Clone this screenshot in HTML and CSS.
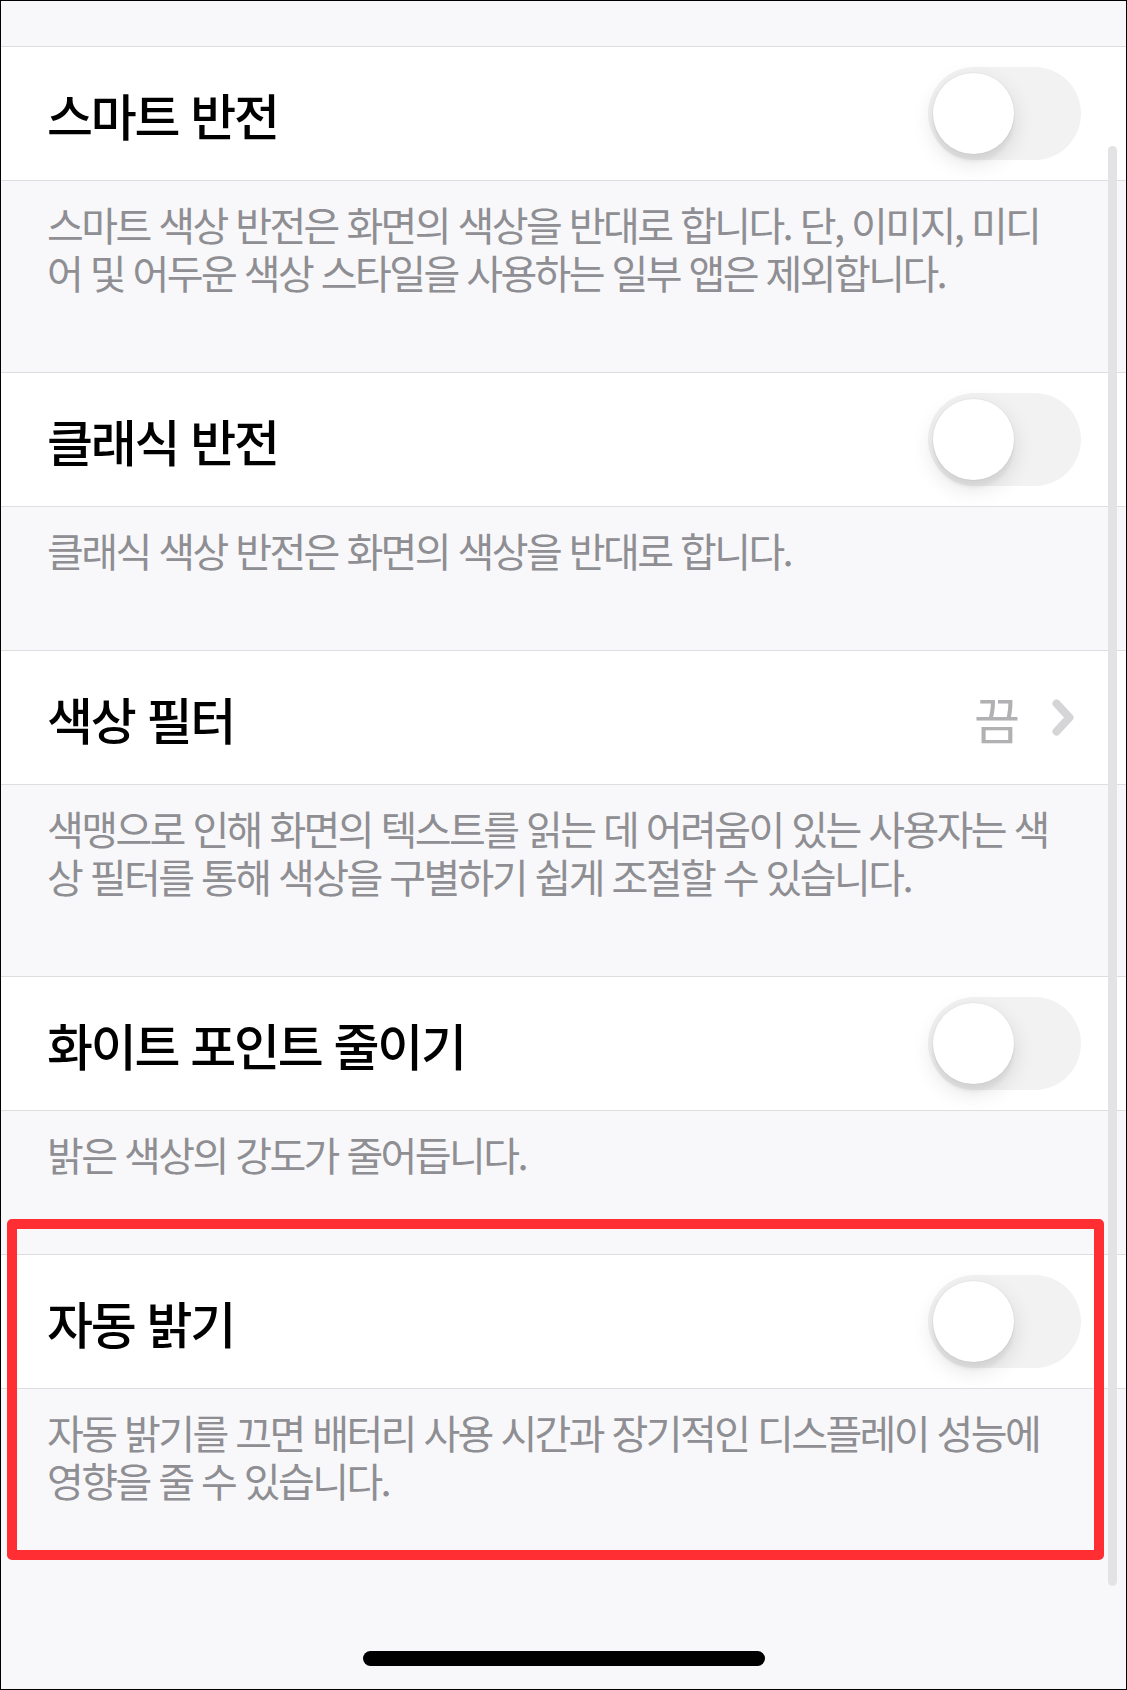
FILE: index.html
```html
<!DOCTYPE html>
<html lang="ko">
<head>
  <meta charset="UTF-8" />
  <meta name="viewport" content="width=device-width, initial-scale=1.0"/>
  <title>디스플레이 및 텍스트 크기</title>
  <link rel="stylesheet" href="styles.css">
</head>
<body>
  <div class="screen">
    <div class="list-top"></div>

    <div class="cell">
      <span class="cell-title">스마트 반전</span>
      <span class="switch"><span class="knob"></span></span>
    </div>
    <p class="footer">스마트 색상 반전은 화면의 색상을 반대로 합니다. 단, 이미지, 미디어 및 어두운 색상 스타일을 사용하는 일부 앱은 제외합니다.</p>

    <div class="cell">
      <span class="cell-title">클래식 반전</span>
      <span class="switch"><span class="knob"></span></span>
    </div>
    <p class="footer">클래식 색상 반전은 화면의 색상을 반대로 합니다.</p>

    <div class="cell">
      <span class="cell-title">색상 필터</span>
      <span class="cell-value">
        끔
        <svg class="chevron" width="22" height="37" viewBox="0 0 22 37">
          <path d="M4.5 4.5 L17.5 18.5 L4.5 32.5" fill="none" stroke="#d5d5d8" stroke-width="8" stroke-linecap="round" stroke-linejoin="round"/>
        </svg>
      </span>
    </div>
    <p class="footer">색맹으로 인해 화면의 텍스트를 읽는 데 어려움이 있는 사용자는 색상 필터를 통해 색상을 구별하기 쉽게 조절할 수 있습니다.</p>

    <div class="cell">
      <span class="cell-title">화이트 포인트 줄이기</span>
      <span class="switch"><span class="knob"></span></span>
    </div>
    <p class="footer">밝은 색상의 강도가 줄어듭니다.</p>

    <div class="cell">
      <span class="cell-title">자동 밝기</span>
      <span class="switch"><span class="knob"></span></span>
    </div>
    <p class="footer">자동 밝기를 끄면 배터리 사용 시간과 장기적인 디스플레이 성능에 영향을 줄 수 있습니다.</p>

    <div class="highlight"></div>
    <div class="scrollbar"></div>
    <div class="home-bar"></div>
  </div>
</body>
</html>
```

FILE: styles.css
```css
* {
  box-sizing: border-box;
}
html, body {
  margin: 0;
  padding: 0;
  background: #f8f8fa;
}
.screen {
  position: relative;
  width: 1127px;
  height: 1690px;
  border: 1px solid #000;
  background: #f8f8fa;
  overflow: hidden;
  font-family: "Noto Sans CJK KR", "Noto Sans", sans-serif;
}
.list-top {
  height: 45px;
}
.cell {
  display: flex;
  align-items: center;
  justify-content: space-between;
  height: 135px;
  padding: 0 45px 0 46px;
  background: #fff;
  border-top: 1px solid #dedee0;
  border-bottom: 1px solid #dedee0;
}
.cell-title {
  font-size: 50px;
  font-weight: 500;
  letter-spacing: -2.2px;
  color: #000;
}
.cell-value {
  display: flex;
  align-items: center;
  gap: 32px;
  padding-right: 7px;
  font-size: 50px;
  color: #b1b1b4;
}
.switch {
  position: relative;
  width: 153px;
  height: 93px;
  border-radius: 47px;
  background: #f2f2f3;
}
.knob {
  position: absolute;
  left: 5px;
  top: 6px;
  width: 81px;
  height: 81px;
  border-radius: 50%;
  background: #fff;
  box-shadow: 0 0 0 1px rgba(0, 0, 0, 0.03), 0 8px 22px rgba(0, 0, 0, 0.12), 0 8px 3px rgba(0, 0, 0, 0.04);
}
.footer {
  margin: 0;
  padding: 19px 62px 76px 46px;
  font-size: 40px;
  line-height: 48px;
  letter-spacing: -2.6px;
  color: #8e8e93;
}
.highlight {
  position: absolute;
  left: 6px;
  top: 1218px;
  width: 1097px;
  height: 341px;
  border: 10px solid #fe2e32;
  border-radius: 5px;
}
.scrollbar {
  position: absolute;
  left: 1107px;
  top: 145px;
  width: 9px;
  height: 1440px;
  border-radius: 5px;
  background: #e3e3e5;
}
.home-bar {
  position: absolute;
  left: 362px;
  top: 1650px;
  width: 402px;
  height: 15px;
  border-radius: 8px;
  background: #000;
}
```
